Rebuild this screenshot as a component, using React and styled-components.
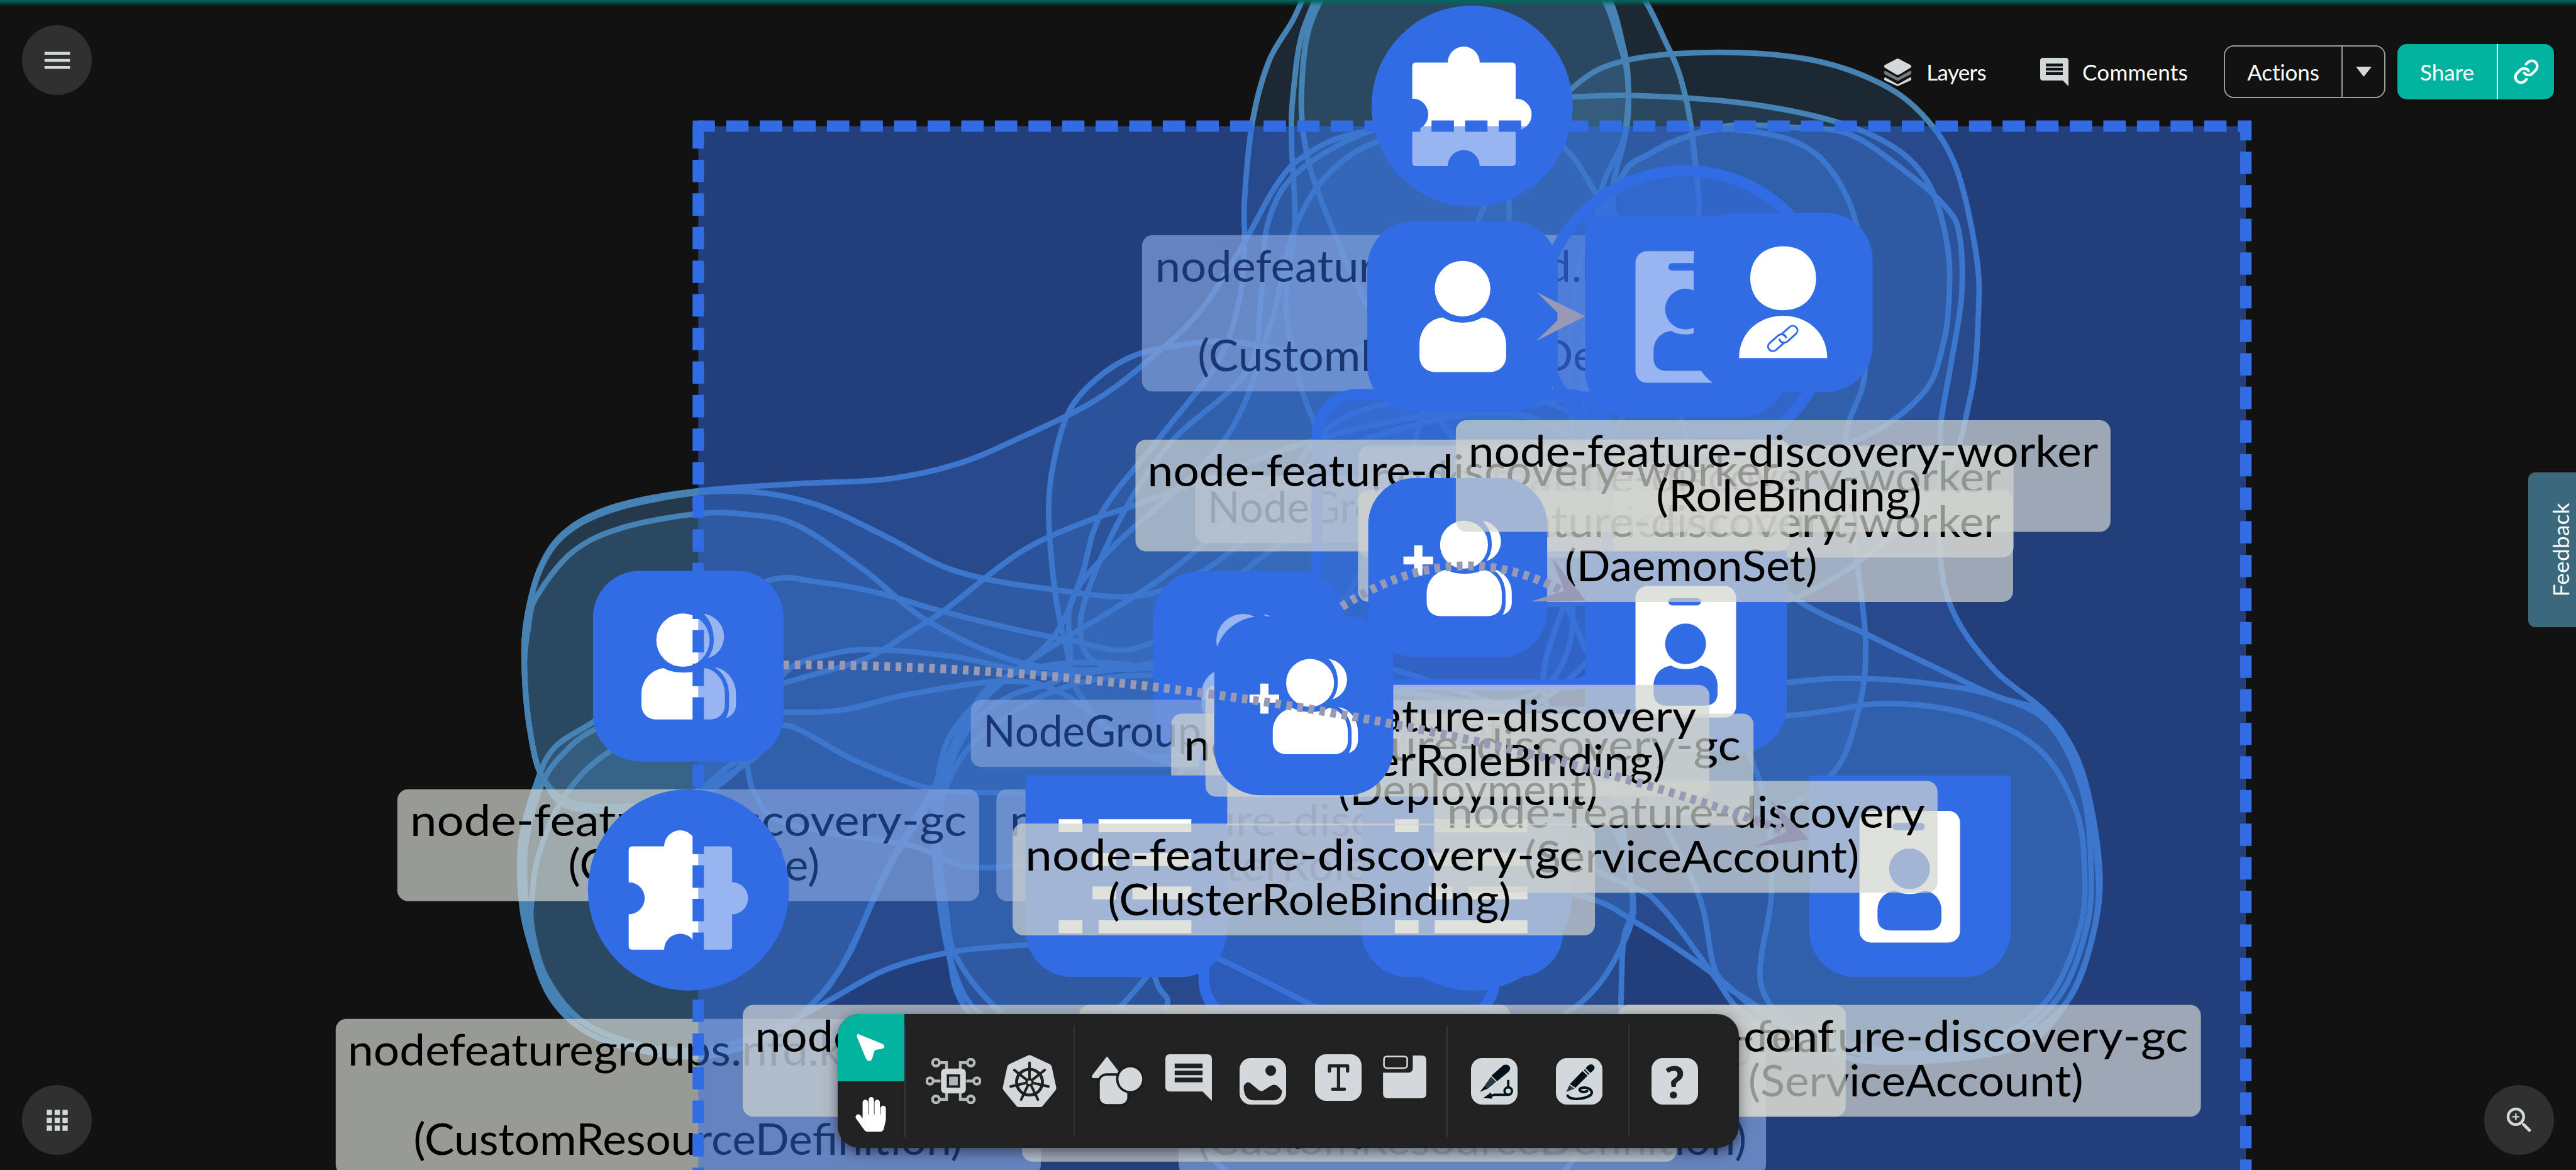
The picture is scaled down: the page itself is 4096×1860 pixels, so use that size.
import React, { useLayoutEffect, useRef, useState } from "react";
import styled, { createGlobalStyle, css } from "styled-components";
import { Link } from "lucide-react";
import { FaHandPaper } from "react-icons/fa";
import { MdApps, MdMenu, MdZoomIn } from "react-icons/md";

const BLUE = "#326ce5";
const TEAL = "#00b39f";
const ICON = "#d3d9db";
const FONT = 'Lato, "Open Sans", sans-serif';

const GlobalStyle = createGlobalStyle`
  * { box-sizing: border-box; }
  html, body { margin: 0; background: #121212; }
  button { font: inherit; color: inherit; border: 0; background: none; padding: 0; }
`;

/* ---------- page ---------- */

const Page = styled.div`
  position: relative;
  width: 4096px;
  height: 1860px;
  overflow: hidden;
  background: #121212;
  color: #fff;
  font-family: ${FONT};
`;

const Viewport = styled.div`
  position: absolute;
  inset: 0;
  overflow: hidden;
`;

const Stage = styled.div`
  position: relative;
  width: 5556px;
  height: 2523px;
  transform: scale(0.73722);
  transform-origin: 0 0;
`;

const Drawing = styled.svg`
  position: absolute;
  left: 0;
  top: 0;
  width: 5556px;
  height: 2523px;
  overflow: visible;
`;

/* ---------- text set to a known advance width ---------- */

const Line = styled.span`
  display: inline-block;
  flex: none;
  white-space: pre;
`;

/* Spreads the letters, or with `stretch` widens them, to reach the width. */
function FitText({ width, stretch, children }) {
  const ref = useRef(null);
  const [style, setStyle] = useState(null);
  useLayoutEffect(() => {
    const natural = ref.current.offsetWidth;
    setStyle(
      stretch
        ? { transform: `scaleX(${width / natural})` }
        : { letterSpacing: (width - natural) / children.length }
    );
  }, []);
  return (
    <Line ref={ref} style={style}>
      {children}
    </Line>
  );
}

/* ---------- canvas nodes ---------- */

const NodeBox = styled.div`
  position: absolute;
  left: ${(p) => p.$x - p.$size / 2}px;
  top: ${(p) => p.$y - p.$size / 2}px;
  width: ${(p) => p.$size}px;
  height: ${(p) => p.$size}px;
  background: ${BLUE};
  border-radius: ${(p) =>
    p.$shape === "circle" ? "50%" : p.$shape === "bottom" ? "0 0 100px 100px" : "100px"};
  ${(p) =>
    p.$outlined &&
    css`
      background: rgba(50, 108, 229, 0.5);
      background-clip: padding-box;
      border: 24px solid ${BLUE};
    `}
  svg {
    display: block;
    width: 100%;
    height: 100%;
  }
`;

const LabelBox = styled.div`
  position: absolute;
  left: ${(p) => p.$x - p.$w / 2}px;
  top: ${(p) => p.$y}px;
  width: ${(p) => p.$w}px;
  padding: 16px 0 33px;
  border-radius: 23px;
  background: rgba(209, 212, 207, 0.7);
  color: #000;
  font-size: 95px;
  line-height: 96px;
`;

const LabelRow = styled.div`
  display: flex;
  justify-content: center;
  height: 96px;
  padding-left: ${(p) => (p.$indent ? 25 : 0)}px;
`;

function Label({ x, y, w, lines }) {
  return (
    <LabelBox $x={x} $y={y} $w={w}>
      {lines.map(([text, width], i) => (
        <LabelRow key={i} $indent={i === 1}>
          {text && (
            <FitText stretch width={width + 9}>
              {text}
            </FitText>
          )}
        </LabelRow>
      ))}
    </LabelBox>
  );
}

const PuzzleGlyph = () => (
  <path
    fill="#fff"
    d="M-121-94H-52.500A34.500 34.500 0 0 1 16.500-94H86Q94-94 94-86V-16.500A34.500 34.500 0 0 1 94 52.500V121Q94 129 86 129H16.500A34.500 34.500 0 0 0-52.500 129H-121Q-129 129-129 121V52.500A34.500 34.500 0 0 0-129-16.500V-86Q-129-94-121-94Z"
  />
);

const UserGlyph = () => (
  <g fill="#fff">
    <circle cx="0" cy="-60" r="60" />
    <path d="M-42 2C-72 4-93 30-93 61V85C-93 107-78 120-58 120H58C78 120 94 107 94 85V61C94 30 72 4 42 2C18 17-18 17-42 2Z" />
  </g>
);

const UsersShape = () => (
  <g fill="#fff">
    <circle cx="-11.500" cy="-56" r="57.500" />
    <path d="M33-113C58-110 77-89 77-65C77-40 61-22 42-17C52-30 55-43 55-58C55-80 47-100 33-113Z" />
    <path d="M-53 4C-82 8-101 32-101 60V82C-101 104-86 115-68 115H45C66 115 79 102 79 82V60C79 32 60 6 33 4C13 17-33 17-53 4Z" />
    <path d="M56 2C84 6 103 32 103 60V82C103 96 95 108 81 112C87 102 88 92 88 82V62C88 36 76 14 56 2Z" />
  </g>
);

const AddUsersGlyph = () => (
  <g>
    <g transform="translate(24 1) scale(.9)">
      <UsersShape />
    </g>
    <path fill="#fff" d="M-94-48H-76V-24H-53V-7H-76V17H-94V-7H-117V-24H-94Z" />
  </g>
);

const BoundUserGlyph = () => (
  <g>
    <path
      fill="#fff"
      d="M0-121C44-121 71-92 71-52C71-12 44 17 0 17C-44 17-71-12-71-52C-71-92-44-121 0-121ZM-95 120C-95 65-52 29 0 29C52 29 95 65 95 120Z"
    />
    <g transform="translate(-35 43) scale(2.850)" fill="none" stroke={BLUE} strokeWidth="1.400" strokeLinecap="round">
      <path d="M11 9l6-5.300c3.800-3 8.300 1.600 5 5l-6.500 5.800c-2.300 1.800-5.200.8-6-1.500" />
      <path d="M13 15.500l-6 5.300c-3.800 3-8.300-1.600-5-5l6.500-5.800c2.300-1.800 5.200-.8 6 1.500" />
    </g>
  </g>
);

const BadgeGlyph = () => (
  <g>
    <rect x="-109" y="-141" width="217" height="284" rx="25" fill="#fff" />
    <rect x="-38" y="-115" width="70" height="16" rx="8" fill={BLUE} />
    <circle cx="-1" cy="-16" r="44" fill={BLUE} />
    <path
      fill={BLUE}
      d="M-32 31C-55 34-70 51-70 74V90C-70 108-59 117-43 117H41C57 117 68 108 68 90V74C68 51 53 34 31 31C14 41-16 41-32 31Z"
    />
  </g>
);

const ListGlyph = () => (
  <path
    fill="#fff"
    d="M-146-123h51v28h-51zM-60-123h200v28h-200zM-73-50h51v28h-51zM13-50h127v28h-127zM-73 22h51v28h-51zM13 22h127v28h-127zM-146 95h51v28h-51zM-60 95h200v28h-200z"
  />
);

const GLYPHS = {
  puzzle: PuzzleGlyph,
  user: UserGlyph,
  users: UsersShape,
  addUsers: AddUsersGlyph,
  boundUser: BoundUserGlyph,
  badge: BadgeGlyph,
  list: ListGlyph,
};

function Node({ x, y, size, shape, outlined, glyph, label }) {
  const Glyph = GLYPHS[glyph];
  return (
    <>
      <NodeBox $x={x} $y={y} $size={size} $shape={shape} $outlined={outlined}>
        {Glyph && (
          <svg viewBox={`${-size / 2} ${-size / 2} ${size} ${size}`}>
            <Glyph />
          </svg>
        )}
      </NodeBox>
      {label && <Label x={x} {...label} />}
    </>
  );
}

const CRD = [
  ["", 0],
  ["(CustomResourceDefinition)", 1175],
];

const LOWER_NODES = [
  {
    x: 3175, y: 229, size: 434, shape: "circle", glyph: "puzzle",
    label: { y: 507, w: 1425, lines: [["nodefeaturerules.nfd.k8s-sigs.io", 1359], ...CRD] },
  },
  { x: 2692, y: 1437, size: 411, glyph: "users",
    label: { y: 1702, w: 1086, lines: [["node-feature-discovery", 1020], ["(ClusterRole)", 533]] } },
  { x: 1484.5, y: 1436, size: 411, glyph: "users",
    label: { y: 1702, w: 1255, lines: [["node-feature-discovery-gc", 1192], ["(ClusterRole)", 533]] } },
  {
    x: 1484.5, y: 1919, size: 434, shape: "circle", glyph: "puzzle",
    label: { y: 2197, w: 1521, lines: [["nodefeaturegroups.nfd.k8s-sigs.io", 1460], ...CRD] },
  },
  {
    x: 3175, y: 1919, size: 434, shape: "circle", glyph: "puzzle",
    label: { y: 2197, w: 1267, lines: [["nodefeatures.nfd.k8s-sigs.io", 1200], ...CRD] },
  },
];

const UPPER_NODES = [
  { x: 2910, y: 1888, size: 650, outlined: true,
    label: { y: 2264, w: 1412, lines: [["node-feature-discovery-master", 1348], ["(Deployment)", 551]] } },
  { x: 4119, y: 1889, size: 435, shape: "bottom", glyph: "badge",
    label: { y: 2167, w: 1256, lines: [["node-feature-discovery-gc", 1192], ["(ServiceAccount)", 714]] } },
  { x: 3154, y: 1889, size: 435, shape: "bottom", glyph: "list",
    label: { y: 2167, w: 1654, lines: [["node-feature-discovery-master-conf", 1592], ["(ConfigMap)", 520]] } },
  { x: 3636, y: 682, size: 435, shape: "bottom", glyph: "badge",
    label: { y: 961, w: 1413, lines: [["node-feature-discovery-worker", 1350], ["(ServiceAccount)", 714]] } },
  { x: 3636, y: 1404, size: 435, shape: "bottom", glyph: "badge",
    label: { y: 1684, w: 1086, lines: [["node-feature-discovery", 1022], ["(ServiceAccount)", 714]] } },
  { x: 3154, y: 1164, size: 650, outlined: true,
    label: { y: 1539, w: 1256, lines: [["node-feature-discovery-gc", 1192], ["(Deployment)", 551]] } },
  { x: 3635, y: 681, size: 650, shape: "circle", outlined: true,
    label: { y: 1057, w: 1413, lines: [["node-feature-discovery-worker", 1350], ["(DaemonSet)", 536]] } },
  { x: 2429.5, y: 1889, size: 435, shape: "bottom", glyph: "list",
    label: { y: 2167, w: 1656, lines: [["node-feature-discovery-worker-conf", 1594], ["(ConfigMap)", 520]] } },
  { x: 3154, y: 682, size: 411, glyph: "user",
    label: { y: 948, w: 1411, lines: [["node-feature-discovery-worker", 1350], ["(Role)", 270]] } },
  { x: 3143.5, y: 1224, size: 386, glyph: "addUsers",
    label: { y: 1477, w: 1087, lines: [["node-feature-discovery", 1022], ["(ClusterRoleBinding)", 861]] } },
  { x: 2812, y: 1522, size: 386, glyph: "addUsers",
    label: { y: 1776, w: 1256, lines: [["node-feature-discovery-gc", 1192], ["(ClusterRoleBinding)", 861]] } },
  { x: 3846, y: 652, size: 386, glyph: "boundUser",
    label: { y: 906, w: 1412, lines: [["node-feature-discovery-worker", 1350], ["(RoleBinding)", 564]] } },
];

/* ---------- group hulls ---------- */

const HULLS = [
  "1131,1440 1136,1335 1167,1220 1224,1143 1330,1091 1502,1059 1722,1043 1913,1033 2066,1000 2200,944 2353,869 2468,785 2583,677 2674,540 2751,402 2812,337 2927,287 3175,262 3350,300 3450,430 3560,640 3500,900 3350,1100 3000,1250 2600,1400 2296,1454 2057,1416 1913,1402 1808,1407 1690,1454 1640,1600 1500,1720 1250,1745 1172,1679 1143,1574",
  "1131,1440 1136,1335 1170,1217 1230,1143 1335,1095 1502,1063 1636,1062 1770,1091 1913,1158 2057,1230 2248,1268 2487,1279 2700,1150 2900,900 3300,860 3520,1000 3560,1200 3400,1450 3150,1600 2800,1700 2500,1760 2210,1713 2018,1703 1846,1641 1690,1564 1620,1640 1450,1725 1250,1735 1172,1679 1143,1574",
  "1131,1440 1140,1350 1157,1287 1234,1191 1339,1139 1502,1108 1617,1110 1722,1134 1865,1230 2009,1344 2229,1435 2500,1440 2900,1420 3400,1560 3855,1543 4065,1517 4257,1543 4400,1618 4477,1746 4496,1874 4486,2002 4419,2152 4300,2240 4119,2275 3900,2250 3760,2184 3692,2098 3587,1960 3506,1906 3200,1800 2700,1780 2152,1870 1961,1823 1693,1775 1626,1708 1593,1641 1450,1740 1250,1740 1172,1679 1143,1574",
  "1282,1555 1196,1612 1157,1689 1124,1813 1124,1937 1143,2033 1186,2148 1263,2224 1387,2267 1530,2277 1670,2230 1750,2167 1817,2081 1923,1861 2018,1708 2076,1564 2171,1459 2400,1430 2800,1500 3300,1500 3380,1250 3150,1050 2800,1150 2487,1385 2296,1378 2057,1325 1900,1280 1770,1256 1655,1253 1500,1350 1350,1500",
  "1290,1570 1210,1630 1165,1700 1134,1820 1134,1937 1150,2033 1195,2145 1275,2215 1395,2257 1530,2262 1680,2215 1789,2157 1913,2090 2057,2052 2210,2038 2500,2020 2900,2200 3154,2290 3396,2173 3501,2034 3520,1917 3450,1750 3200,1650 2800,1660 2500,1640 2300,1500 2171,1469 1961,1497 1817,1531 1690,1536 1450,1530",
  "1320,1617 1224,1708 1165,1832 1148,1930 1148,2004 1180,2110 1260,2205 1387,2255 1530,2272 1650,2240 1750,2167 1830,2060 1900,1900 1960,1790 2018,1690 2060,1600 2130,1500 2267,1380 2330,1250 2376,1106 2506,938 2629,777 2674,640 2684,525 2684,433 2701,264 2736,134 2785,50 2850,-60 3000,-150 3300,-160 3500,-60 3597,100 3637,216 3658,368 3660,484 3600,700 3400,850 3050,900 2800,960 2458,1086 2344,1124 2200,1191 2037,1316 1961,1364 1865,1421 1690,1473 1500,1530",
  "2816,50 2789,203 2786,318 2793,479 2774,632 2785,739 2830,900 2950,1100 3300,1130 3460,1000 3440,700 3450,430 3504,296 3512,189 3501,100 3460,-20 3350,-120 3100,-130 2900,-80",
  "2827,50 2807,203 2816,318 2850,433 2950,662 3100,900 3300,1150 3420,1400 3550,1700 3663,1928 3702,2098 3778,2162 3950,2270 4119,2290 4352,2258 4457,2162 4515,2013 4524,1864 4486,1661 4419,1543 4304,1501 4190,1447 4037,1373 3853,1277 3700,1100 3560,700 3480,450 3504,296 3512,189 3495,100 3440,-30 3300,-120 3050,-120 2900,-60",
  "3392,189 3504,131 3691,113 3896,127 4048,176 4146,247 4218,359 4262,546 4267,680 4249,859 4180,1050 3950,1250 3700,1330 3400,1300 2900,1380 2600,1600 2450,1620 2330,1500 2301,1402 2277,1287 2262,1115 2272,1000 2307,884 2376,808 2460,762 2583,739 2674,739 2900,760 3100,640 3250,350",
  "3392,209 3557,207 3780,225 3968,265 4093,323 4164,404 4200,529 4204,636 4191,743 4146,850 4003,950 3700,1050 3300,1150 3000,1400 2700,1420 2400,1440 2330,1350 2400,1150 2520,960 2690,800 2720,640 2735,480 2800,370 2960,280 3175,225",
  "3495,386 3557,332 3646,292 3736,270 3870,275 3990,290 4110,370 4200,450 4227,511 4231,636 4209,779 4187,904 4185,967 4185,1202 4218,1330 4304,1447 4419,1543 4490,1661 4528,1864 4515,2013 4457,2162 4330,2250 4119,2285 3920,2240 3800,2130 3821,1917 3800,1700 3700,1500 3480,1200 3420,900 3430,600",
  "3495,386 3557,332 3646,292 3736,279 3870,305 3950,368 4004,484 4017,636 4021,814 3980,950 4000,1170 4024,1383 4008,1533 3950,1671 3800,1750 3500,1720 3330,1500 3400,1200 3390,900 3400,600",
  "2057,1574 2018,1708 2014,1813 2028,1957 2047,2062 2085,2177 2250,2330 2560,2460 2740,2580 3175,2640 3370,2530 3480,2300 3501,2034 3520,1917 3460,1500 3500,1100 3300,900 3000,930 2750,1050 2500,1250 2200,1440",
  "2090,1570 2030,1708 2024,1813 2040,1957 2062,2062 2152,2177 2300,2280 2430,2300 2516,2172 2492,2110 2440,1900 2560,1650 2800,1450 3000,1100 3100,800 3250,500 3200,330 3000,300 2870,370 2790,500 2740,700 2640,950 2400,1180 2310,1300 2300,1450 2180,1500",
  "3855,1472 4008,1463 4161,1474 4304,1501 4419,1560 4490,1700 4510,1864 4500,2002 4440,2150 4320,2245 4119,2270 3900,2230 3797,2184 3692,2098 3530,1990 3396,1928 3000,1850 2600,2000 2415,2172 2300,2290 2130,2200 2060,2100 2025,1900 2040,1700 2150,1560 2400,1460 2900,1480 3400,1530",
];

/* Closed Catmull-Rom curve through the hull's points. */
function hullPath(source) {
  const pts = source.split(" ").map((p) => p.split(",").map(Number));
  const at = (i) => pts[(i + pts.length) % pts.length];
  let d = `M${at(0)}`;
  pts.forEach((p, i) => {
    const [a, b, c] = [at(i - 1), at(i + 1), at(i + 2)];
    d += `C${p[0] + (b[0] - a[0]) / 6} ${p[1] + (b[1] - a[1]) / 6} ${b[0] - (c[0] - p[0]) / 6} ${b[1] - (c[1] - p[1]) / 6} ${b[0]} ${b[1]}`;
  });
  return `${d}Z`;
}

const Hulls = () => (
  <Drawing viewBox="0 0 5556 2523">
    <g fill="#4682b4" fillOpacity=".2" stroke="#4682b4" strokeWidth="12">
      {HULLS.map((h, i) => (
        <path key={i} d={hullPath(h)} />
      ))}
    </g>
  </Drawing>
);

const SelectedFrame = () => (
  <Drawing viewBox="0 0 5556 2523">
    <rect x="1506" y="272" width="3338" height="2300" fill={BLUE} fillOpacity=".5" />
    <g fill="none" stroke={BLUE} strokeWidth="24.500" strokeDasharray="48.300 24.150">
      <path d="M1506 272H4844V2560" strokeDashoffset="12.300" />
      <path d="M1506 272V2560" />
    </g>
    <path d="M1494 260h24v24h-24z" fill={BLUE} />
  </Drawing>
);

const Edges = () => (
  <Drawing viewBox="0 0 5556 2523">
    <g fill="none" stroke="#9799b5" strokeWidth="19" strokeDasharray="12.100 12.100">
      <path d="M1690 1434C2350 1430 3200 1550 3850 1792" />
      <path d="M2894 1308Q3140 1150 3372 1276" />
    </g>
    <g fill="#9799b5">
      <path d="M3819 1725L3902 1810L3786 1826L3854 1794Z" />
      <path d="M3348 1204L3420 1295L3302 1297L3374 1274Z" />
      <path d="M3314 630L3419 682L3314 735L3359 691V674Z" />
    </g>
  </Drawing>
);

/* ---------- controls over the canvas ---------- */

const Overlay = styled.div`
  position: absolute;
  inset: 0;
  display: flex;
  flex-direction: column;
  font-size: 35px;
  line-height: 42px;
`;

const TopGlow = styled.div`
  position: absolute;
  inset: 0 0 auto 0;
  height: 10px;
  background: linear-gradient(#006a5e, rgba(0, 80, 70, 0));
`;

const Header = styled.header`
  display: flex;
  justify-content: space-between;
  align-items: flex-start;
  height: 190px;
  padding: 40px 35px 0;
`;

const RoundButton = styled.button`
  display: flex;
  align-items: center;
  justify-content: center;
  width: 111px;
  height: 111px;
  border-radius: 50%;
  background: #303030;
  color: ${ICON};
  font-size: ${(p) => p.$icon}px;
`;

const Actions = styled.nav`
  display: flex;
  align-items: center;
  margin-top: 30px;
  height: 88px;
`;

const PanelLink = styled.button`
  display: flex;
  align-items: center;
  gap: ${(p) => p.$gap}px;
  margin-right: ${(p) => p.$after}px;
  svg {
    width: 45px;
    height: 45px;
  }
`;

const Split = styled.div`
  display: flex;
  align-items: stretch;
  overflow: hidden;
  ${(p) =>
    p.$filled
      ? css`
          width: 249px;
          height: 88px;
          border-radius: 15px;
          background: ${TEAL};
          box-shadow: 0 3px 8px rgba(0, 0, 0, 0.4);
        `
      : css`
          width: 257px;
          height: 84px;
          margin-right: 19px;
          border: 2px solid #9b9b9b;
          border-radius: 16px;
        `}
`;

const SplitMain = styled.button`
  display: flex;
  flex: 1;
  align-items: center;
  justify-content: center;
`;

const SplitSide = styled.button`
  display: flex;
  align-items: center;
  justify-content: center;
  width: ${(p) => p.$w}px;
  border-left: 2px solid ${(p) => p.$line};
`;

const Main = styled.main`
  display: flex;
  flex: 1;
  justify-content: flex-end;
  align-items: flex-start;
`;

const FeedbackTab = styled.button`
  display: flex;
  align-items: center;
  justify-content: center;
  width: 76px;
  height: 246px;
  margin-top: 561px;
  padding-left: 26px;
  border-radius: 11px 0 0 11px;
  background: #3c687b;
  writing-mode: vertical-rl;
`;

const FeedbackText = styled.span`
  display: block;
  transform: rotate(180deg);
  white-space: nowrap;
  letter-spacing: 0.4px;
`;

const Footer = styled.footer`
  display: flex;
  justify-content: space-between;
  align-items: flex-end;
  padding: 0 35px 24px;
`;

const Dock = styled.div`
  display: flex;
  width: 1433px;
  height: 213px;
  margin-bottom: 11px;
  border-radius: 35px;
  background: #212121;
  overflow: hidden;
  box-shadow: 0 6px 20px rgba(0, 0, 0, 0.5);
`;

const ModeColumn = styled.div`
  display: flex;
  flex-direction: column;
  width: 106px;
`;

const Mode = styled.button`
  display: flex;
  flex: 1;
  align-items: center;
  justify-content: center;
  background: ${(p) => (p.$active ? TEAL : "transparent")};
`;

const ToolGroup = styled.div`
  display: flex;
  align-items: center;
  width: ${(p) => p.$w}px;
  margin: 17.500px 0;
  padding-left: ${(p) => p.$pad}px;
  border-left: 2px solid #353535;
`;

const Tool = styled.button`
  display: flex;
  margin-right: ${(p) => p.$after || 0}px;
  margin-bottom: ${(p) => p.$lift || 0}px;
  svg {
    display: block;
    width: ${(p) => p.$w || 74}px;
    height: ${(p) => p.$h || 74}px;
  }
`;

const LayersIcon = () => (
  <svg viewBox="0 0 60 60">
    <path fill={ICON} d="M3 41L30 56L57 41Q61 45 57 48L30 60L3 48Q-1 45 3 41Z" />
    <path fill="#777b7c" d="M3 27L30 42L57 27Q61 31 57 35L30 49L3 35Q-1 31 3 27Z" />
    <path fill={ICON} d="M26 3Q30 0 34 3L57 15Q61 18 57 21L34 35Q30 37 26 35L3 21Q-1 18 3 15Z" />
  </svg>
);

const CommentIcon = ({ hole }) => (
  <svg viewBox="0 0 100 100">
    <path fill={ICON} d="M10 0H90Q100 0 100 10V100L80 80H10Q0 80 0 70V10Q0 0 10 0Z" />
    <path stroke={hole} strokeWidth="10" d="M20 25H80M20 40H80M20 55H80" />
  </svg>
);

const CaretIcon = () => (
  <svg width="25" height="16" viewBox="0 0 25 16">
    <path fill={ICON} d="M0 0H25L12.500 16Z" />
  </svg>
);

const CursorIcon = () => (
  <svg width="45" height="45" viewBox="0 0 64 64">
    <path
      fill="#fff"
      d="M3 1L58 23Q63 26 63 30Q62 34 56 35L44 37Q40 38 39 43L35 58Q32 63 28 62Q24 62 21 56L1 8Q0 2 3 1Z"
    />
  </svg>
);

const ChipIcon = () => (
  <svg viewBox="0 0 120 100">
    <g fill="none" stroke="#b4b9b9" strokeWidth="6">
      <path d="M30 10H45V26M90 10H75V26M30 90H45V74M90 90H75V74M17 50H32M88 50H103" />
      <circle cx="22" cy="10" r="7.500" />
      <circle cx="98" cy="10" r="7.500" />
      <circle cx="22" cy="90" r="7.500" />
      <circle cx="98" cy="90" r="7.500" />
      <circle cx="9" cy="50" r="7" />
      <circle cx="111" cy="50" r="7" />
    </g>
    <rect x="33" y="23" width="54" height="54" rx="9" fill={ICON} />
    <rect x="48" y="38" width="24" height="24" fill="#aeb3b3" stroke="#1c1c1c" strokeWidth="5" />
  </svg>
);

const HelmIcon = () => (
  <svg viewBox="0 0 116 113">
    <path
      fill={ICON}
      d="M55 1Q58 0 61 1L102 20Q105 22 106 25L116 71Q116 74 114 77L87 110Q85 113 81 113H35Q31 113 29 110L2 77Q0 74 0 71L10 25Q11 22 14 20Z"
    />
    <g fill="none" stroke="#212121" strokeWidth="5.500" strokeLinecap="round">
      <circle cx="58" cy="59" r="28" strokeWidth="6.500" />
      {[0, 1, 2, 3, 4, 5, 6].map((i) => (
        <path key={i} d="M58 52V17" transform={`rotate(${(i * 360) / 7} 58 59)`} />
      ))}
    </g>
    <circle cx="58" cy="59" r="9" fill="#212121" />
    <circle cx="58" cy="59" r="4" fill={ICON} />
  </svg>
);

const ShapesIcon = () => (
  <svg viewBox="0 0 112 112">
    <path fill={ICON} d="M34 3L64 42Q68 50 60 50H6Q-1 50 3 43Z" />
    <rect x="16" y="42" width="64" height="66" rx="17" fill={ICON} stroke="#1b1b1b" strokeWidth="5" />
    <circle cx="84" cy="52" r="28" fill={ICON} stroke="#1b1b1b" strokeWidth="5" />
  </svg>
);

const ImageIcon = () => (
  <svg viewBox="0 0 100 100">
    <rect width="100" height="100" rx="24" fill={ICON} />
    <circle cx="67" cy="27" r="11.500" fill="#212121" />
    <path
      fill="#212121"
      d="M9 60Q17 46 27 57L40 68Q47 74 54 68L66 60Q76 54 84 62L91 70Q91 91 69 91H31Q11 91 9 66Z"
    />
  </svg>
);

const TextIcon = () => (
  <svg viewBox="0 0 100 100">
    <rect width="100" height="100" rx="24" fill={ICON} />
    <path
      fill="none"
      stroke="#212121"
      strokeWidth="7"
      strokeLinecap="round"
      strokeLinejoin="round"
      d="M31 36V25H70V36M50.500 25V75M38 75H63"
    />
  </svg>
);

const SectionIcon = () => (
  <svg viewBox="0 0 93 92">
    <path fill={ICON} d="M64 0H83Q93 0 93 10V82Q93 92 83 92H10Q0 92 0 82V37H54Q64 36 64 27Z" />
    <rect x="2" y="2" width="50" height="25" rx="6" fill="#212121" stroke={ICON} strokeWidth="3.500" />
  </svg>
);

const PenIcon = () => (
  <svg viewBox="0 0 100 100">
    <rect width="100" height="100" rx="24" fill={ICON} />
    <path fill="#00101a" d="M70 15Q80 12 84 20Q85 25 80 30L56 50L44 38Z" />
    <path fill="#2b3a41" d="M43 40L54 51L36 66L26 68L30 58Z" />
    <path fill="#00101a" d="M29 60L35 66L19 73Z" />
    <path fill="none" stroke="#00101a" strokeWidth="5" d="M80 47V64M80 79H50L34 84" />
    <circle cx="80" cy="71" r="8" fill="none" stroke="#00101a" strokeWidth="5" />
    <path fill="#00101a" d="M26 86L43 74L46 87Z" />
  </svg>
);

const PencilIcon = () => (
  <svg viewBox="0 0 100 100">
    <rect width="100" height="100" rx="24" fill={ICON} />
    <path fill="#00101a" d="M68 17Q76 10 82 17Q85 22 80 27L74 32L64 22ZM62 24L72 34L70 36L60 26ZM57 28L68 38L42 64L30 56Z" />
    <path fill="#2b3a41" d="M29 58L40 66L22 73Z" />
    <path
      fill="none"
      stroke="#00101a"
      strokeWidth="5.500"
      strokeLinecap="round"
      d="M25 81C32 92 62 88 74 80C84 70 68 60 53 65C46 70 58 76 67 71"
    />
  </svg>
);

const HelpBadge = styled.span`
  display: flex;
  align-items: center;
  justify-content: center;
  width: 74px;
  height: 74px;
  border-radius: 18px;
  background: ${ICON};
  color: #212121;
  font: 900 70px/74px ${FONT};
`;

export default function App() {
  return (
    <Page>
      <GlobalStyle />
      <Viewport>
        <Stage>
          <Hulls />
          {LOWER_NODES.map((n, i) => (
            <Node key={i} {...n} />
          ))}
          <Label x={2692} y={1509} w={1197} lines={[["NodeGroup (ServiceKubelet)", 1135]]} />
          <Label x={3176} y={1026} w={1197} lines={[["NodeGroup (ServiceKubelet)", 1135]]} />
          <SelectedFrame />
          {UPPER_NODES.map((n, i) => (
            <Node key={i} {...n} />
          ))}
          <Edges />
        </Stage>
      </Viewport>

      <Overlay>
        <TopGlow />
        <Header>
          <RoundButton $icon={54}>
            <MdMenu />
          </RoundButton>
          <Actions>
            <PanelLink $gap={23} $after={86}>
              <LayersIcon />
              <FitText width={95}>Layers</FitText>
            </PanelLink>
            <PanelLink $gap={22} $after={57}>
              <CommentIcon hole="#121212" />
              <FitText width={168}>Comments</FitText>
            </PanelLink>
            <Split>
              <SplitMain>
                <FitText width={115}>Actions</FitText>
              </SplitMain>
              <SplitSide $w={68} $line="#9b9b9b">
                <CaretIcon />
              </SplitSide>
            </Split>
            <Split $filled>
              <SplitMain>
                <FitText width={86}>Share</FitText>
              </SplitMain>
              <SplitSide $w={91} $line="#fff">
                <Link size={42} strokeWidth={2.4} />
              </SplitSide>
            </Split>
          </Actions>
        </Header>

        <Main>
          <FeedbackTab>
            <FeedbackText>Feedback</FeedbackText>
          </FeedbackTab>
        </Main>

        <Footer>
          <RoundButton $icon={50}>
            <MdApps />
          </RoundButton>
          <Dock>
            <ModeColumn>
              <Mode $active>
                <CursorIcon />
              </Mode>
              <Mode>
                <FaHandPaper size={55} />
              </Mode>
            </ModeColumn>
            <ToolGroup $w={269} $pad={32}>
              <Tool $w={88} $h={73} $after={34}>
                <ChipIcon />
              </Tool>
              <Tool $w={86} $h={83}>
                <HelmIcon />
              </Tool>
            </ToolGroup>
            <ToolGroup $w={593} $pad={26}>
              <Tool $w={83} $h={83} $after={35}>
                <ShapesIcon />
              </Tool>
              <Tool $after={44} $lift={12}>
                <CommentIcon hole="#212121" />
              </Tool>
              <Tool $after={46}>
                <ImageIcon />
              </Tool>
              <Tool $after={34} $lift={12}>
                <TextIcon />
              </Tool>
              <Tool $w={69} $h={68} $lift={14}>
                <SectionIcon />
              </Tool>
            </ToolGroup>
            <ToolGroup $w={289} $pad={37}>
              <Tool $after={61}>
                <PenIcon />
              </Tool>
              <Tool>
                <PencilIcon />
              </Tool>
            </ToolGroup>
            <ToolGroup $w={176} $pad={35}>
              <Tool>
                <HelpBadge>?</HelpBadge>
              </Tool>
            </ToolGroup>
          </Dock>
          <RoundButton $icon={54}>
            <MdZoomIn />
          </RoundButton>
        </Footer>
      </Overlay>
    </Page>
  );
}
